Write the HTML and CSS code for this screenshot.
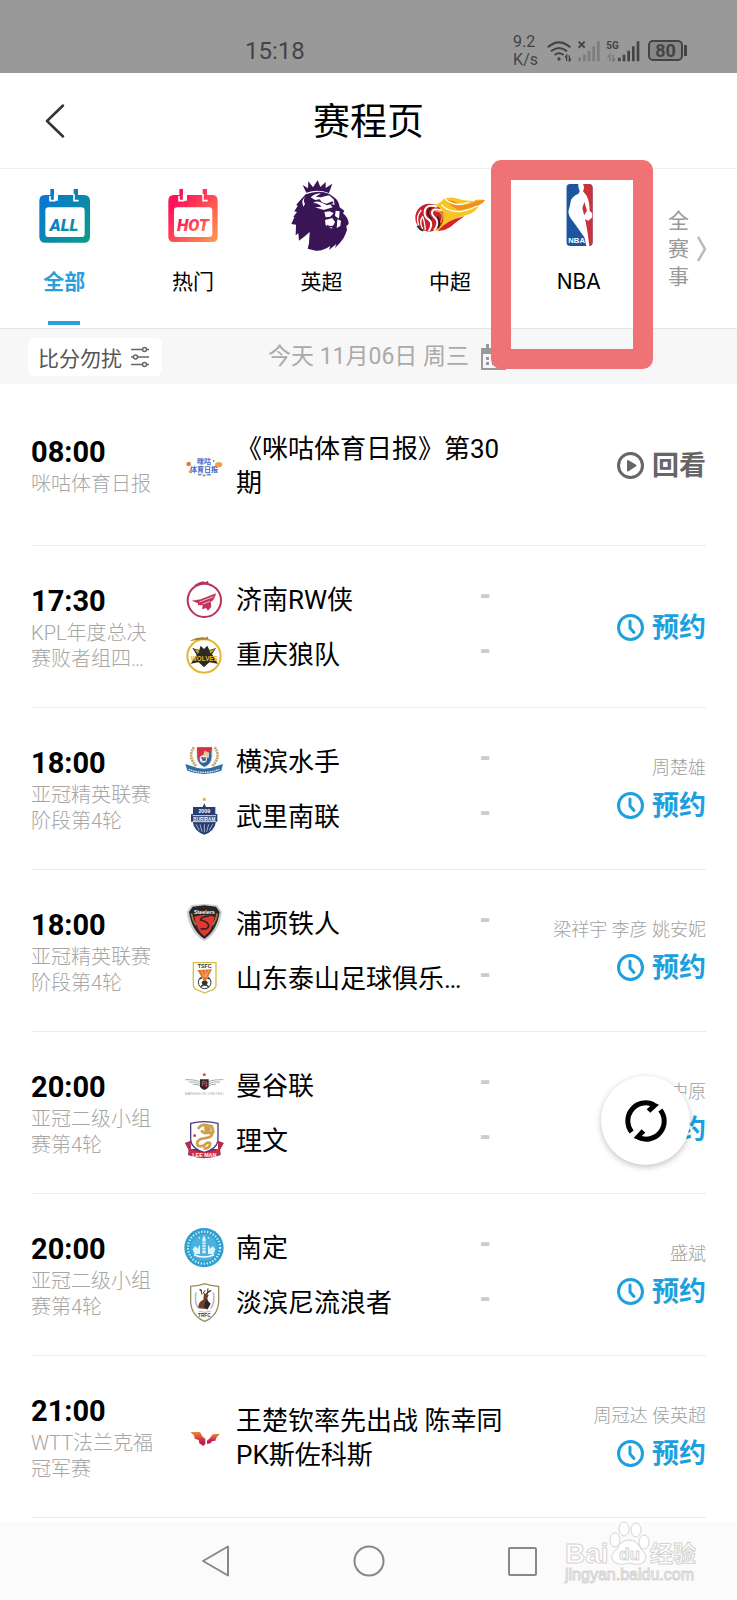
FILE: index.html
```html
<!DOCTYPE html>
<html lang="zh-CN">
<head>
    <meta charset="UTF-8">
    <meta name="viewport" content="width=device-width, initial-scale=1.0">
    <title>赛程页</title>
    <link rel="stylesheet" href="styles.css">
</head>
<body>
    <!-- 共用图标 -->
    <svg class="defs" width="0" height="0" aria-hidden="true">
        <symbol id="clock" viewBox="0 0 27 27">
            <circle cx="13.5" cy="13.5" r="12" fill="none" stroke="currentColor" stroke-width="3"/>
            <path d="M13 7v7l4 4.500" fill="none" stroke="currentColor" stroke-width="3" stroke-linecap="round" stroke-linejoin="round"/>
        </symbol>
        <symbol id="play" viewBox="0 0 27 27">
            <circle cx="13.5" cy="13.5" r="12" fill="none" stroke="currentColor" stroke-width="3"/>
            <path d="M11 9l7.500 4.500L11 18.500z" fill="currentColor" stroke="currentColor" stroke-width="2" stroke-linejoin="round"/>
        </symbol>
    </svg>

    <div class="status-bar">
        <span class="clock-text">15:18</span>
        <div class="status-icons">
            <span class="speed">9.2<br>K/s</span>
            <svg width="25" height="22" viewBox="0 0 75 66" fill="none" stroke="#444" stroke-width="6">
                <path d="M2 22q34-30 68 0M12 34q24-20 48 0M23 45q13-10 27 0"/>
                <circle cx="36" cy="57" r="5" fill="#444" stroke="none"/>
                <path d="M59 63V46l-5 7M67 46v17l5-7" stroke-width="4"/>
            </svg>
            <svg width="24" height="22" viewBox="0 0 72 66">
                <path d="M5 5l18 18M23 5L5 23" stroke="#444" stroke-width="6"/>
                <path d="M8 53v11M22 44v20M36 32v32M50 19v45M64 4v60" stroke="#7d7d7d" stroke-width="8"/>
            </svg>
            <svg width="35" height="22" viewBox="0 0 105 66">
                <text x="1" y="27" class="net">5G</text>
                <path d="M12 64V44l-7 8M21 44v20l7-8" fill="none" stroke="#7d7d7d" stroke-width="5"/>
                <path d="M40 53v11M54 44v20M68 32v32M82 19v45M96 4v60" stroke="#444" stroke-width="8"/>
            </svg>
            <span class="battery">80</span>
        </div>
    </div>

    <header class="header">
        <button class="back" type="button" aria-label="返回">
            <svg width="20" height="34" viewBox="0 0 20 34" fill="none" stroke="#333" stroke-width="2.500" stroke-linecap="round" stroke-linejoin="round"><path d="M18 1.500L2 17l16 15.500"/></svg>
        </button>
        <h1>赛程页</h1>
    </header>

    <nav class="tabs">
        <a class="tab active" href="#all">
            <svg viewBox="0 0 216 216">
                <linearGradient id="gAll" x1="0" y1="0" x2="1" y2="1"><stop offset="0" stop-color="#0a72dc"/><stop offset="1" stop-color="#0b9c87"/></linearGradient>
                <path d="M50 45H67V27H78V62H90V45H137V27H150V62H138V45H168Q186 45 186 63V170Q186 188 168 188H52Q34 188 34 170V63Q34 45 50 45Z" fill="url(#gAll)"/>
                <path d="M80 42V62H66V48M138 42V62H152" fill="none" stroke="#fff" stroke-width="5"/>
                <rect x="52" y="82" width="118" height="89" rx="10" fill="#fff"/>
                <text x="108" y="152" class="tag" fill="url(#gAll)">ALL</text>
            </svg>
            <span>全部</span>
        </a>
        <a class="tab" href="#hot">
            <svg viewBox="0 0 216 216">
                <linearGradient id="gHot" x1="0" y1="0" x2="1" y2="1"><stop offset="0.200" stop-color="#ff1259"/><stop offset="1" stop-color="#ff9c4d"/></linearGradient>
                <path d="M50 45H67V27H78V62H90V45H137V27H150V62H138V45H168Q182 45 182 63V170Q182 186 166 186H50Q34 186 34 170V63Q34 45 50 45Z" fill="url(#gHot)"/>
                <path d="M80 42V62H66V48M138 42V62H152" fill="none" stroke="#fff" stroke-width="5"/>
                <rect x="51" y="82" width="115" height="89" rx="10" fill="#fff"/>
                <text x="108" y="152" class="tag" fill="url(#gHot)">HOT</text>
            </svg>
            <span>热门</span>
        </a>
        <a class="tab" href="#epl">
            <svg viewBox="0 0 216 216">
                <path d="M64 38L53 15l16 10L70 4l14 18L98 1l8 20 16-15v18l20-13-10 28Q98 26 64 38Z" fill="#3a1555"/>
                <path d="M62 43Q100 28 132 41L150 54Q162 64 164 82L178 92 174 100Q190 112 191 132L184 138 186 150Q182 162 176 174L164 190 150 204 154 192 132 210 136 198Q112 214 92 212L68 206 72 190 74 156Q54 174 42 182L40 160 32 166 33 134 19 132 28 112 25 110 36 96 28 94 38 78 34 74 44 62Z" fill="#3a1555"/>
                <path d="M63 49Q52 58 60 72L55 80Q46 60 63 49ZM77 52Q90 40 108 40L92 51 108 52 132 46 146 58 149 74 134 72 143 82 116 90 90 82 110 80Q94 66 84 70Q92 60 112 68L104 58 90 60ZM118 96L134 94 146 100 136 110 122 112ZM152 92L164 94 162 116 150 108ZM120 120L142 114 150 126 140 146 122 136ZM157 118L168 122 166 138 155 144Z" fill="#fff"/>
                <path d="M100 63l24 8 18-7 4 6-20 6ZM126 134q12 8 24 0l6-6v8q-12 10-30 4Z" fill="#3a1555"/>
            </svg>
            <span>英超</span>
        </a>
        <a class="tab" href="#csl">
            <svg viewBox="0 0 216 216">
                <path d="M56 74Q76 74 88 58Q104 50 124 54Q150 64 178 63Q192 56 214 60Q206 70 196 74Q186 98 156 106Q116 114 94 140Q82 154 66 152Z" fill="#f8c526"/>
                <path d="M96 60Q116 60 136 72Q160 78 188 62L214 60Q206 70 196 74Q166 86 134 92Q112 80 96 60Z" fill="#f0901f"/>
                <path d="M82 74Q104 98 142 94Q168 90 190 78M94 58Q124 84 166 66" fill="none" stroke="#fff" stroke-width="4"/>
                <path d="M72 152Q96 122 152 108Q126 126 108 142Q90 154 72 152Z" fill="#d5232b"/>
                <circle cx="46" cy="113" r="42" fill="#c9202b"/>
                <path d="M70 80Q36 70 32 94Q30 112 46 120Q58 132 44 154M84 92Q56 82 54 98Q54 106 66 116Q76 132 60 152" fill="none" stroke="#fff" stroke-width="6"/>
                <path d="M14 136Q4 110 22 90M26 148Q14 122 26 110Q32 124 34 150" fill="none" stroke="#fff" stroke-width="4"/>
                <path d="M52 84Q40 88 42 102Q46 112 54 118M70 110Q82 126 72 144M10 138Q16 148 28 152" fill="none" stroke="#222" stroke-width="5"/>
                <path d="M64 94Q76 90 84 104Q86 116 80 128" fill="none" stroke="#f3a32b" stroke-width="4"/>
            </svg>
            <span>中超</span>
        </a>
        <a class="tab" href="#nba">
            <svg viewBox="0 0 216 216">
                <clipPath id="nbaClip"><rect x="70" y="12" width="79" height="186" rx="12"/></clipPath>
                <g clip-path="url(#nbaClip)">
                    <rect x="70" y="12" width="79" height="186" fill="#1d56a0"/>
                    <path d="M116 10H152V200H134L128 150L108 90Z" fill="#c9323b"/>
                    <path d="M106 12H120Q126 22 120 34L130 46Q140 64 140 94Q150 96 148 112L136 122Q124 120 122 108L132 92 124 66 118 84Q130 130 134 160L139 198H130L124 172Q98 134 84 116Q72 100 79 84L84 60Q92 46 106 42L110 34Q104 22 106 12Z" fill="#fff"/>
                    <text x="76" y="188" class="nba">NBA</text>
                </g>
            </svg>
            <span>NBA</span>
            <i class="mark"></i>
        </a>
        <a class="all-events" href="#events">
            <span>全<br>赛<br>事</span>
            <svg width="10" height="26" viewBox="0 0 10 26" fill="none" stroke="#bbb" stroke-width="2.500"><path d="M1 1l7 12-7 12"/></svg>
        </a>
    </nav>

    <div class="date-bar">
        <button class="quiet" type="button">比分勿扰
            <svg width="20" height="22" viewBox="0 0 20 22" fill="none" stroke="#666" stroke-width="1.500"><path d="M1 3.500h11M17 3.500h2M1 11h2M8 11h11M1 18.500h11M17 18.500h2"/><circle cx="14.500" cy="3.500" r="2"/><circle cx="5.500" cy="11" r="2"/><circle cx="14.500" cy="18.500" r="2"/></svg>
        </button>
        <span class="date">今天 11月06日 周三</span>
        <button class="calendar" type="button" aria-label="选择日期">
            <svg width="25" height="26" viewBox="0 0 25 26"><path d="M1 5H24V25H1Z" fill="none" stroke="#999" stroke-width="2"/><path d="M0 4H25V10H0ZM5 0h3v5H5zM17 0h3v5h-3zM5 13h3v3H5zM11 13h3v3h-3zM17 13h3v3h-3zM5 18h3v3H5zM11 18h3v3h-3zM17 18h3v3h-3z" fill="#999"/></svg>
        </button>
    </div>

    <ul class="matches">
        <li class="match">
            <div class="info"><time>08:00</time><p>咪咕体育日报</p></div>
            <div class="main">
                <div class="program">
                    <svg class="badge" viewBox="0 0 120 120">
                        <text x="60" y="54" class="migu">咪咕</text>
                        <text x="60" y="77" class="migu">体育日报</text>
                        <circle cx="14" cy="54" r="7" fill="#d9803a"/><circle cx="19" cy="77" r="5" fill="#e39a62"/>
                        <ellipse cx="104" cy="56" rx="11" ry="8" fill="#f0a04b"/><circle cx="89" cy="45" r="3" fill="#69a95b"/>
                        <path d="M42 86h10M56 88h8M68 86h12" stroke="#7a86b8" stroke-width="5"/>
                    </svg>
                    <span>《咪咕体育日报》第30期</span>
                </div>
            </div>
            <div class="side"><button class="action replay" type="button"><svg><use href="#play"/></svg>回看</button></div>
        </li>

        <li class="match">
            <div class="info"><time>17:30</time><p>KPL年度总决赛败者组四强赛</p></div>
            <div class="main">
                <div class="team">
                    <svg class="badge" viewBox="0 0 120 120">
                        <circle cx="61" cy="61" r="50" fill="none" stroke="#b5365a" stroke-width="6"/>
                        <path d="M28 18Q50 0 66 6L72 2 74 12Q50 10 28 18Z" fill="#b5365a"/>
                        <path d="M23 62L50 58 96 40Q92 60 80 66L82 80 72 92 66 84 54 88 56 76 42 76 42 70Z" fill="#c2345c"/>
                        <path d="M46 66l42-16M56 72l22-8" stroke="#fff" stroke-width="2"/>
                    </svg>
                    <span class="name">济南RW侠</span><span class="score">-</span>
                </div>
                <div class="team">
                    <svg class="badge" viewBox="0 0 120 120">
                        <circle cx="60" cy="63" r="50" fill="#fff" stroke="#e6b632" stroke-width="6"/>
                        <path d="M20 16Q44 4 66 8L70 4 74 14Q44 12 20 18Z" fill="#a78030"/>
                        <path d="M25 39L46 45 50 32 60 42 70 32 76 45 96 39 84 58 102 86 76 82 60 97 44 82 20 86 38 60Z" fill="#2c2922"/>
                        <path d="M30 42L46 47 42 56ZM92 42L76 47 80 56Z" fill="#d3a23a"/>
                        <text x="61" y="78" class="crest wolves">WOLVES</text>
                    </svg>
                    <span class="name">重庆狼队</span><span class="score">-</span>
                </div>
            </div>
            <div class="side"><button class="action" type="button"><svg><use href="#clock"/></svg>预约</button></div>
        </li>

        <li class="match">
            <div class="info"><time>18:00</time><p>亚冠精英联赛阶段第4轮</p></div>
            <div class="main">
                <div class="team">
                    <svg class="badge" viewBox="0 0 120 120">
                        <path d="M30 16Q10 42 36 72M92 16Q112 42 86 72" fill="none" stroke="#c3a668" stroke-width="8" stroke-dasharray="6 2"/>
                        <path d="M39 16H84V44Q84 66 61 76Q39 66 39 44Z" fill="#2d63a4" stroke="#ddd" stroke-width="3"/>
                        <path d="M39 16H84V24L41 54Z" fill="#d53247"/>
                        <path d="M62 26l14 6-2 16-18-4Z" fill="#e6c797"/><circle cx="58" cy="51" r="11" fill="#eee"/><path d="M52 48h5v6h6v-9" stroke="#345" stroke-width="4" fill="none"/>
                        <path d="M4 66L22 72Q60 88 98 72L117 66 112 86Q60 106 10 86Z" fill="#316da5"/>
                        <path d="M14 82Q60 100 106 82" fill="none" stroke="#d8e3ef" stroke-width="4" stroke-dasharray="5 2"/>
                    </svg>
                    <span class="name">横滨水手</span><span class="score">-</span>
                </div>
                <div class="team">
                    <svg class="badge" viewBox="0 0 120 120">
                        <path d="M61 0l2 5h5l-4 3 2 5-5-3-5 3 2-5-4-3h5Z" fill="#d99b3b"/>
                        <path d="M61 19L66 30H94V50L100 52V74H96Q92 102 61 113Q30 102 26 74H21V52L27 50V30H56Z" fill="#283d72"/>
                        <path d="M36 82l10 18M48 82l6 22M61 82v24M74 82l-6 22M86 82l-10 18" stroke="#a7b1cc" stroke-width="3"/>
                        <text x="61" y="49" class="crest">2009</text>
                        <path d="M26 56H96M26 74H96" stroke="#d8dce8" stroke-width="3"/>
                        <text x="61" y="71" class="crest small">BURIRAM</text>
                    </svg>
                    <span class="name">武里南联</span><span class="score">-</span>
                </div>
            </div>
            <div class="side"><p>周楚雄</p><button class="action" type="button"><svg><use href="#clock"/></svg>预约</button></div>
        </li>

        <li class="match">
            <div class="info"><time>18:00</time><p>亚冠精英联赛阶段第4轮</p></div>
            <div class="main">
                <div class="team">
                    <svg class="badge" viewBox="0 0 120 120">
                        <path d="M22 3L61 0 100 3 114 24Q106 86 61 112Q16 86 8 24Z" fill="#ccd0d4"/>
                        <path d="M26 8L61 4 96 8 107 24Q98 82 61 104Q24 82 15 24Z" fill="#2b2425"/>
                        <path d="M31 38Q61 28 92 38Q86 80 61 97Q38 80 31 38Z" fill="#e23834"/>
                        <path d="M22 28q4 22 14 36M100 28q-4 22-14 36" stroke="#a7773d" stroke-width="5" fill="none"/>
                        <path d="M76 36Q50 38 50 48Q74 54 74 66Q72 78 50 74" fill="none" stroke="#2b2425" stroke-width="5"/>
                        <text x="61" y="31" class="crest">Steelers</text>
                    </svg>
                    <span class="name">浦项铁人</span><span class="score">-</span>
                </div>
                <div class="team">
                    <svg class="badge" viewBox="0 0 120 120">
                        <path d="M28 11H96V80Q94 92 80 94L62 102 44 94Q30 92 28 80Z" fill="#fff" stroke="#d4bd48" stroke-width="4"/>
                        <text x="62" y="27" class="crest dark">TSFC</text>
                        <circle cx="62" cy="70" r="19" fill="#fff" stroke="#333" stroke-width="3"/>
                        <path d="M62 64l7 6-3 8H58l-3-8ZM46 60l8-3M78 60l-8-3M50 84l6-5M74 84l-6-5" fill="#333" stroke="#333" stroke-width="4"/>
                        <path d="M40 33L84 31 66 66 60 66Z" fill="#e4742c"/>
                        <path d="M52 34l8 20M64 34v22M74 34l-8 20" stroke="#f7c9a6" stroke-width="2"/>
                    </svg>
                    <span class="name">山东泰山足球俱乐部</span><span class="score">-</span>
                </div>
            </div>
            <div class="side"><p>梁祥宇 李彦 姚安妮</p><button class="action" type="button"><svg><use href="#clock"/></svg>预约</button></div>
        </li>

        <li class="match">
            <div class="info"><time>20:00</time><p>亚冠二级小组赛第4轮</p></div>
            <div class="main">
                <div class="team">
                    <svg class="badge" viewBox="0 0 120 120">
                        <path d="M61 20l2 3 4 1-3 3 1 4-4-2-4 2 1-4-3-3 4-1Z" fill="#d8463f"/>
                        <path d="M4 41Q34 40 50 48M14 48Q36 46 50 54M26 55Q40 54 50 60M118 41Q88 40 72 48M108 48Q86 46 72 54M96 55Q82 54 72 60" fill="none" stroke="#aaa" stroke-width="3"/>
                        <path d="M48 40H74V62Q72 68 61 72Q50 68 48 62Z" fill="#27282a"/><path d="M55 60V46h8v7H55M62 55l6 8V46" fill="none" stroke="#b9515a" stroke-width="3"/>
                        <text x="61" y="87" class="crest pale">BANGKOK UNITED</text>
                    </svg>
                    <span class="name">曼谷联</span><span class="score">-</span>
                </div>
                <div class="team">
                    <svg class="badge" viewBox="0 0 120 120">
                        <path d="M3 66L20 60V84L102 84V60L119 66 108 86 110 102Q60 122 12 102L14 86Z" fill="#6d2c63"/>
                        <path d="M3 66L20 60V84L14 86ZM119 66L102 60V84L108 86Z" fill="#b82c4a"/>
                        <path d="M20 7Q60-3 102 7V58Q98 84 61 94Q24 84 20 58Z" fill="#fff" stroke="#4b3b80" stroke-width="4"/>
                        <path d="M16 82Q60 106 106 82L106 102Q60 120 16 102Z" fill="#cf3043"/>
                        <path d="M42 24Q50 10 66 12L84 16 88 34 72 36Q56 38 52 28M84 34Q88 44 72 50L50 54Q34 62 42 74Q58 80 68 66Q82 62 78 72Q74 84 58 82" fill="none" stroke="#cf9f4c" stroke-width="8" stroke-linejoin="round"/>
                        <path d="M60 14l20 4v14l-18 2Z" fill="#cf9f4c"/>
                        <circle cx="32" cy="44" r="4" fill="#cf3043"/>
                        <text x="61" y="109" class="crest">LEE MAN</text>
                    </svg>
                    <span class="name">理文</span><span class="score">-</span>
                </div>
            </div>
            <div class="side"><p>中原</p><button class="action" type="button"><svg><use href="#clock"/></svg>预约</button></div>
        </li>

        <li class="match">
            <div class="info"><time>20:00</time><p>亚冠二级小组赛第4轮</p></div>
            <div class="main">
                <div class="team">
                    <svg class="badge" viewBox="0 0 120 120">
                        <circle cx="60" cy="59" r="59" fill="#2f9fd0"/>
                        <circle cx="60" cy="59" r="48" fill="none" stroke="#d5eef8" stroke-width="7" stroke-dasharray="4 5"/>
                        <circle cx="60" cy="59" r="40" fill="#48b2dc"/>
                        <path d="M60 22l5 12v42h-10V34ZM26 64l8-10 6 8 8-12v28H32ZM94 64l-8-10-6 8-8-12v28H88Z" fill="#e1f4fb"/>
                        <path d="M54 42h12M54 50h12M54 58h12M54 66h12" stroke="#2f9fd0" stroke-width="2"/>
                        <path d="M30 80Q60 94 90 80" stroke="#fff" stroke-width="5" fill="none"/>
                        <circle cx="46" cy="30" r="2" fill="#fff"/><circle cx="74" cy="30" r="2" fill="#fff"/>
                    </svg>
                    <span class="name">南定</span><span class="score">-</span>
                </div>
                <div class="team">
                    <svg class="badge" viewBox="0 0 120 120">
                        <path d="M20 10Q46 8 61 2Q78 8 104 10V56Q102 98 62 115Q22 98 20 56Z" fill="#fff" stroke="#9a8b5e" stroke-width="4"/>
                        <path d="M36 28Q30 60 44 76M88 28Q94 60 80 76" fill="none" stroke="#b9bdc4" stroke-width="5"/>
                        <path d="M54 34L50 18M57 32l6-10M70 34l2-18M66 32l14-8M54 24l-8-4M72 26l10-4" stroke="#3a2f2a" stroke-width="3"/>
                        <path d="M60 30L74 36 70 46 74 62 68 78 44 76Q40 58 58 50Z" fill="#713f27"/><path d="M66 48L80 62 70 80 60 72Z" fill="#2d2522"/>
                        <path d="M44 84Q62 92 80 84" stroke="#999" stroke-width="2" fill="none"/>
                        <text x="61" y="102" class="crest dark small">TRFC</text>
                    </svg>
                    <span class="name">淡滨尼流浪者</span><span class="score">-</span>
                </div>
            </div>
            <div class="side"><p>盛斌</p><button class="action" type="button"><svg><use href="#clock"/></svg>预约</button></div>
        </li>

        <li class="match">
            <div class="info"><time>21:00</time><p>WTT法兰克福冠军赛</p></div>
            <div class="main">
                <div class="program">
                    <svg class="badge" viewBox="0 0 120 120">
                        <linearGradient id="gWtt" x1="0" y1="0" x2="0" y2="1"><stop offset="0" stop-color="#f0862f"/><stop offset="0.700" stop-color="#c2204f"/></linearGradient>
                        <path d="M19 42H48L56 56 64 62V78L58 84 46 76 44 66 32 62 30 52Z" fill="url(#gWtt)"/>
                        <path d="M108 47L86 49 78 60 69 68V78L80 76 84 70 94 68 98 58Z" fill="url(#gWtt)"/>
                    </svg>
                    <span>王楚钦率先出战 陈幸同PK斯佐科斯</span>
                </div>
            </div>
            <div class="side"><p>周冠达 侯英超</p><button class="action" type="button"><svg><use href="#clock"/></svg>预约</button></div>
        </li>
    </ul>

    <button class="refresh" type="button" aria-label="刷新">
        <svg width="42" height="42" viewBox="0 0 126 126">
            <path d="M20 96A54 54 0 0 1 86 14M106 30A54 54 0 0 1 40 112" fill="none" stroke="#000" stroke-width="15"/>
            <path d="M78 4L102 14 76 38 65 28 76 18ZM48 122L26 114 50 88 61 98 50 108Z"/>
        </svg>
    </button>

    <footer class="nav-bar">
        <button type="button" aria-label="返回"><svg width="34" height="34" viewBox="0 0 34 34"><path d="M4 17L29 2.500V31.500Z"/></svg></button>
        <button type="button" aria-label="主页"><svg width="34" height="34" viewBox="0 0 34 34"><circle cx="17" cy="17" r="14.500"/></svg></button>
        <button type="button" aria-label="最近任务"><svg width="34" height="34" viewBox="0 0 34 34"><rect x="4" y="4" width="27" height="27" rx="1"/></svg></button>
        <svg class="watermark" width="136" height="66" viewBox="0 0 136 66">
            <text x="1" y="43" class="wm-big">Bai</text>
            <path d="M65 20Q57 20 53 29Q44 36 50 42Q55 46 65 43Q75 46 80 42Q85 36 77 29Q73 20 65 20Z"/>
            <ellipse cx="51" cy="20" rx="5" ry="7"/><ellipse cx="60" cy="9" rx="5" ry="7"/><ellipse cx="72" cy="10" rx="5" ry="7"/><ellipse cx="80" cy="22" rx="5" ry="7"/>
            <text x="55" y="40" class="wm-du">du</text>
            <text x="86" y="42" class="wm-cn">经验</text>
            <text x="1" y="60" class="wm-url">jingyan.baidu.com</text>
        </svg>
    </footer>
</body>
</html>
```

FILE: styles.css
```css
* {
    box-sizing: border-box;
}
body {
    margin: 0;
    min-height: 100vh;
    display: flex;
    flex-direction: column;
    font-family: Roboto, "Noto Sans CJK SC", sans-serif;
    color: #000;
    background-color: #fff;
}
h1, p, ul {
    margin: 0;
    padding: 0;
}
a {
    color: inherit;
    text-decoration: none;
}
button {
    padding: 0;
    border: none;
    background: none;
    font: inherit;
    color: inherit;
    cursor: pointer;
}
svg {
    display: block;
    flex: none;
}
.defs {
    position: absolute;
}

/* 状态栏 */
.status-bar {
    display: flex;
    justify-content: space-between;
    align-items: center;
    height: 73px;
    padding: 28px 50px 0 245px;
    background-color: #999;
    color: #444;
}
.clock-text {
    font-size: 24px;
}
.status-icons {
    display: flex;
    align-items: center;
    gap: 5px;
}
.speed {
    margin-right: 4px;
    font-size: 16px;
    line-height: 18px;
}
.net {
    font: bold 30px Roboto, sans-serif;
    fill: #444;
}
.battery {
    position: relative;
    width: 35px;
    margin: 0 4px 0 2px;
    border: 2px solid #444;
    border-radius: 5px;
    background-color: #888;
    font-size: 18px;
    font-weight: bold;
    line-height: 17px;
    text-align: center;
}
.battery::after {
    content: "";
    position: absolute;
    top: 3px;
    right: -6px;
    width: 3px;
    height: 11px;
    background-color: #444;
}

/* 标题 */
.header {
    display: grid;
    grid-template-columns: 1fr auto 1fr;
    align-items: center;
    height: 96px;
    padding: 0 45px;
    border-bottom: 1px solid #eee;
}
.back {
    justify-self: start;
}
h1 {
    padding-top: 4px;
    font-size: 37px;
    font-weight: 400;
    line-height: 48px;
}

/* 赛事分类 */
.tabs {
    display: grid;
    grid-template-columns: repeat(5, 1fr) 94px;
    border-bottom: 1px solid #e4e4e4;
}
.tab {
    position: relative;
    display: flex;
    flex-direction: column;
    align-items: center;
    gap: 14px;
    padding: 11px 0 30px;
    font-family: Inter, "Noto Sans CJK SC", sans-serif;
    font-size: 21px;
    line-height: 32px;
}
.tab svg {
    width: 72px;
    height: 72px;
}
.tab.active {
    color: #2b9fda;
    font-weight: bold;
}
.tab.active::after {
    content: "";
    position: absolute;
    bottom: 3px;
    width: 32px;
    height: 4px;
    background-color: #2b9fda;
}
.tag {
    font: italic 900 50px Roboto, sans-serif;
    text-anchor: middle;
}
.nba {
    font: bold 23px "Liberation Sans", sans-serif;
    fill: #fff;
}
/* 选中框 */
.mark {
    position: absolute;
    z-index: 2;
    top: -9px;
    bottom: -41px;
    left: -23px;
    right: -10px;
    border: 20px solid #ef7275;
    border-radius: 10px;
}
.all-events {
    display: flex;
    align-items: center;
    gap: 8px;
    padding-left: 25px;
    color: #999;
    font-size: 21px;
    line-height: 28px;
}

/* 日期栏 */
.date-bar {
    display: grid;
    grid-template-columns: 1fr auto 1fr;
    align-items: center;
    gap: 12px;
    height: 55px;
    padding: 0 28px;
    background-color: #f7f7f7;
}
.quiet {
    justify-self: start;
    display: flex;
    align-items: center;
    gap: 8px;
    height: 38px;
    padding: 0 12px 0 10px;
    border-radius: 6px;
    background-color: #fff;
    color: #555;
    font-size: 21px;
}
.date {
    color: #aaa;
    font-size: 23px;
    line-height: 32px;
}
.calendar {
    justify-self: start;
}

/* 赛程列表 */
.matches {
    flex: 1;
    padding: 0 31px;
    list-style: none;
}
.match {
    display: grid;
    grid-template-columns: 125px 1fr 160px;
    gap: 28px;
    align-items: center;
    min-height: 162px;
    border-bottom: 1px solid #ebebeb;
}
.info time {
    display: block;
    font-size: 29px;
    font-weight: bold;
    line-height: 38px;
}
.info p {
    display: -webkit-box;
    -webkit-box-orient: vertical;
    -webkit-line-clamp: 2;
    overflow: hidden;
    color: #a6a6a6;
    font-size: 20px;
    font-weight: 300;
    line-height: 26px;
}
.main {
    display: flex;
    flex-direction: column;
    gap: 15px;
    min-width: 0;
    padding-top: 2px;
    font-size: 26px;
    line-height: 34px;
}
.program, .team {
    display: flex;
    align-items: center;
    gap: 12px;
}
.badge {
    width: 40px;
    height: 40px;
    overflow: visible;
}
.name {
    flex: 1;
    overflow: hidden;
    white-space: nowrap;
    text-overflow: ellipsis;
}
.score {
    align-self: flex-start;
    width: 20px;
    margin-right: 23px;
    color: #ccc;
    font-family: "Liberation Sans", sans-serif;
    font-size: 32px;
    font-weight: bold;
    line-height: 26px;
    text-align: center;
}
.side {
    display: flex;
    flex-direction: column;
    align-items: flex-end;
    padding-top: 2px;
}
.side p {
    color: #a0a0a0;
    font-size: 18px;
    font-weight: 300;
    line-height: 32px;
}
.action {
    display: flex;
    align-items: center;
    gap: 8px;
    color: #209fdf;
    font-size: 27px;
    font-weight: bold;
    line-height: 44px;
}
.action svg {
    width: 27px;
    height: 27px;
}
.replay {
    color: #666;
}

/* 队徽里的小字 */
.crest {
    font: bold 16px "Liberation Sans", sans-serif;
    fill: #fff;
    text-anchor: middle;
}
.crest.wolves {
    font-size: 19px;
    fill: #e6b632;
}
.crest.small {
    font-size: 14px;
}
.crest.dark {
    fill: #333;
}
.crest.pale {
    font-size: 13px;
    font-weight: 400;
    fill: #aaa;
}
.migu {
    font: bold 21px "Noto Sans CJK SC", sans-serif;
    fill: #4468c4;
    text-anchor: middle;
}

/* 刷新按钮 */
.refresh {
    position: fixed;
    right: 47px;
    bottom: 435px;
    display: flex;
    justify-content: center;
    align-items: center;
    width: 89px;
    height: 89px;
    border-radius: 50%;
    background-color: #fff;
    box-shadow: 0 2px 6px rgba(0, 0, 0, 0.25);
}
.refresh svg {
    overflow: visible;
}

/* 系统导航 */
.nav-bar {
    position: relative;
    display: flex;
    justify-content: center;
    align-items: center;
    gap: 119px;
    height: 78px;
    background-color: #fbfbfb;
}
.nav-bar button svg {
    fill: none;
    stroke: #888;
    stroke-width: 2;
    stroke-linejoin: round;
}
.nav-bar .watermark {
    position: absolute;
    top: -2px;
    right: 37px;
    fill: #fff;
    stroke: #d4d4d4;
    stroke-width: 1;
}
.wm-big {
    font: bold 28px "Liberation Sans", sans-serif;
}
.wm-du {
    font: bold 17px "Liberation Sans", sans-serif;
}
.wm-cn {
    font: bold 23px "Noto Sans CJK SC", sans-serif;
}
.wm-url {
    font: 16px "Liberation Sans", sans-serif;
}
```
